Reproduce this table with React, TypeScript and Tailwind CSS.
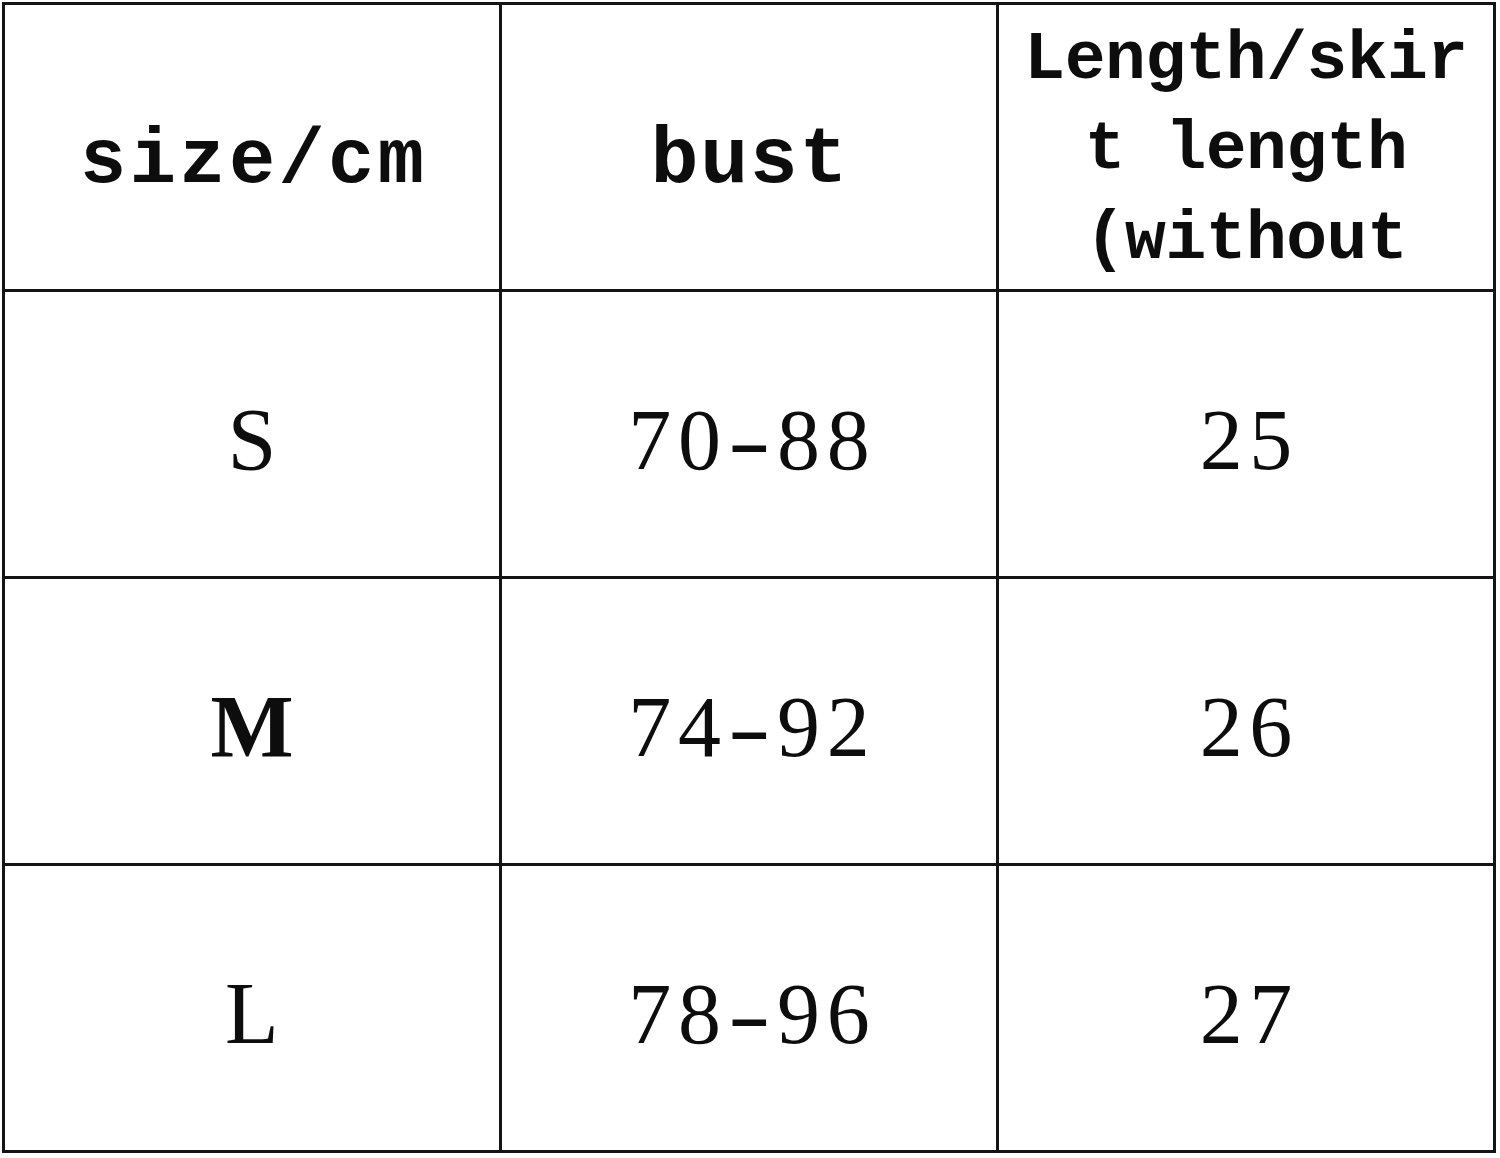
const rows = [
  { size: "S", bust: "70-88", length: "25" },
  { size: "M", bust: "74-92", length: "26" },
  { size: "L", bust: "78-96", length: "27" },
]

const cell =
  "flex h-[287px] items-center justify-center border-r-[3px] border-b-[3px] border-[#141414] text-center"

// fixed-advance glyphs, like the half-width latin of a CJK font
function Mono({ text, wide }: { text: string; wide?: boolean }) {
  return (
    <span className="inline-flex whitespace-pre">
      {text.split("").map((ch, i) => (
        <span
          key={i}
          className={`inline-block text-center ${wide ? "w-[49.6px]" : "w-[40.3px]"}`}
        >
          {ch === "-" ? <span className="inline-block scale-x-[1.5]">-</span> : ch}
        </span>
      ))}
    </span>
  )
}

export default function App() {
  return (
    <div className="h-[1158px] w-[1500px] bg-white pt-[2px] pl-[2px] font-['Liberation_Serif',serif] text-[#0d0d0d]">
      <div className="grid w-[1494px] grid-cols-3 border-t-[3px] border-l-[3px] border-[#141414]">
        <div className={`${cell} pt-[29px]`}>
          <span className="font-['Liberation_Mono',monospace] text-[77px] leading-none font-bold">
            <Mono text="size/cm" wide />
          </span>
        </div>
        <div className={`${cell} pt-[27px]`}>
          <span className="font-['Liberation_Mono',monospace] text-[80px] leading-none font-bold">
            <Mono text="bust" wide />
          </span>
        </div>
        <div className={`${cell} pt-[6px]`}>
          <div className="flex flex-col items-center font-['Liberation_Mono',monospace] text-[68px] leading-[90px] font-semibold">
            <Mono text="Length/skir" />
            <Mono text="t length" />
            <Mono text="(without" />
          </div>
        </div>
        {rows.map((row) => (
          <>
            <div key={`${row.size}-s`} className={`${cell} pt-[12px]`}>
              <span
                className={`text-[88px] leading-none ${row.size === "M" ? "font-bold" : ""}`}
              >
                {row.size}
              </span>
            </div>
            <div key={`${row.size}-b`} className={`${cell} pt-[12px]`}>
              <span className="text-[86px] leading-none">
                <Mono text={row.bust} wide />
              </span>
            </div>
            <div key={`${row.size}-l`} className={`${cell} pt-[12px]`}>
              <span className="text-[86px] leading-none">
                <Mono text={row.length} wide />
              </span>
            </div>
          </>
        ))}
      </div>
    </div>
  )
}
